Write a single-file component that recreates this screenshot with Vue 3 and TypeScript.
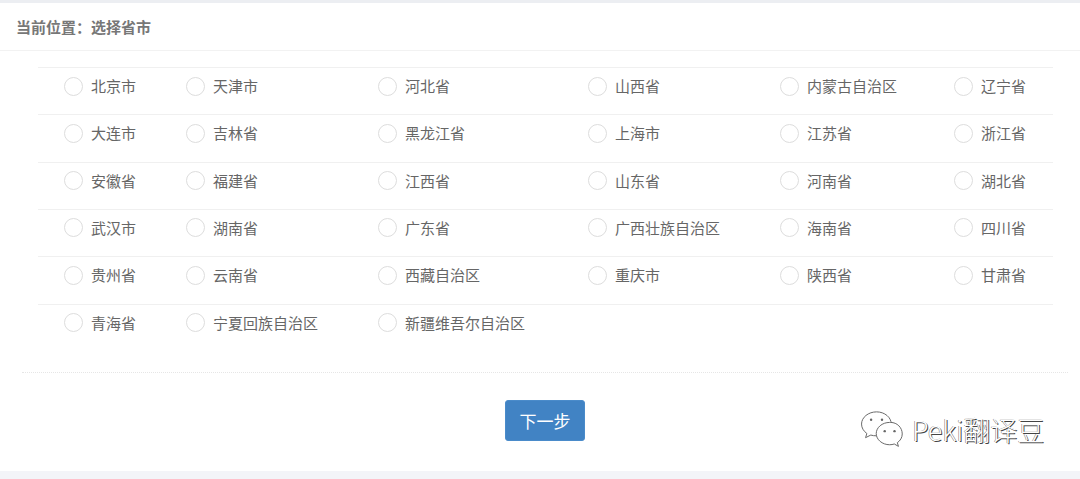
<script setup lang="ts">
const rows: string[][] = [
  ['北京市', '天津市', '河北省', '山西省', '内蒙古自治区', '辽宁省'],
  ['大连市', '吉林省', '黑龙江省', '上海市', '江苏省', '浙江省'],
  ['安徽省', '福建省', '江西省', '山东省', '河南省', '湖北省'],
  ['武汉市', '湖南省', '广东省', '广西壮族自治区', '海南省', '四川省'],
  ['贵州省', '云南省', '西藏自治区', '重庆市', '陕西省', '甘肃省'],
  ['青海省', '宁夏回族自治区', '新疆维吾尔自治区'],
]
</script>

<template>
  <div class="page">
    <header class="head">当前位置：选择省市</header>
    <main class="body">
      <div class="list">
        <div v-for="(row, i) in rows" :key="i" class="row">
          <label v-for="name in row" :key="name" class="opt">
            <span class="radio"></span>
            <span class="name">{{ name }}</span>
          </label>
        </div>
      </div>
    </main>
    <div class="actions">
      <button class="next" type="button">下一步</button>
    </div>
    <div class="mark">
      <svg class="wechat" width="44" height="37" viewBox="0 0 40 34" fill="#fff" stroke="#666" stroke-width="0.9">
        <path d="M15 .8C7.500.8 1.200 5.800 1.200 12c0 3.500 1.900 6.500 4.900 8.700l-1.200 3.800 4.800-2.400c1.600.5 3.200.7 5 .7 7.500 0 13.800-4.900 13.800-10.900S22.500.8 15 .8z" />
        <circle cx="10" cy="8" r="1.100" fill="#666" stroke="none" />
        <circle cx="20" cy="8" r="1.100" fill="#666" stroke="none" />
        <path d="M27 10.500c-6.800 0-12.300 4.600-12.300 10.200S20.200 31 27 31c1.500 0 3-.2 4.300-.7l3.800 2.200-1-3.400c2.800-1.900 4.500-4.800 4.500-8 0-5.900-4.800-10.600-10.600-10.600z" />
        <circle cx="22.500" cy="18.500" r="1.100" fill="#666" stroke="none" />
        <circle cx="31.500" cy="18.500" r="1.100" fill="#666" stroke="none" />
      </svg>
      <span class="mark-text">Peki翻译豆</span>
    </div>
  </div>
</template>

<style>
html, body { margin: 0; background: #fff; }
</style>

<style scoped>
.page {
  position: relative;
  width: 1080px;
  height: 479px;
  box-sizing: border-box;
  overflow: hidden;
  background: #fff;
  border-top: 3px solid #eceef2;
  border-bottom: 8px solid #f3f4f8;
  font-family: "Liberation Sans", "Noto Sans CJK SC", sans-serif;
}
.head {
  height: 48px;
  box-sizing: border-box;
  padding: 15px 16px 0;
  border-bottom: 1px solid #f2f2f2;
  font-size: 15px;
  line-height: 20px;
  font-weight: 700;
  color: #777;
}
.body {
  margin: 0 12px 0 22px;
  height: 322px;
  box-sizing: border-box;
  padding: 16px 15px 0 16px;
  border-bottom: 1px dotted #e6e6e6;
}
.row {
  display: grid;
  grid-template-columns: 122px 192px 210px 192px 174px 1fr;
  height: 47.340px;
  box-sizing: border-box;
  padding-left: 26px;
  border-top: 1px solid #f0f0f0;
}
.opt {
  display: flex;
  align-items: center;
  height: 37px;
}
.radio {
  width: 19px;
  height: 19px;
  box-sizing: border-box;
  border: 1px solid #ddd;
  border-radius: 50%;
  background: #fff;
  margin-right: 8px;
  margin-top: -1px;
}
.name {
  font-size: 15px;
  color: #666;
  white-space: nowrap;
  line-height: 37px;
}
.actions {
  display: flex;
  justify-content: center;
  padding: 27px 0 0 10px;
}
.next {
  width: 80px;
  height: 41px;
  padding: 0;
  border: 1px solid #4a8bca;
  border-radius: 3px;
  background: #4183c4;
  color: #fff;
  font-family: inherit;
  font-size: 17px;
}
.mark {
  position: absolute;
  left: 860px;
  top: 408px;
  display: flex;
  align-items: center;
}
.mark-text {
  margin-left: 8px;
  font-family: "Noto Sans CJK SC", sans-serif;
  font-weight: 300;
  font-size: 27px;
  line-height: 32px;
  color: #fff;
  text-shadow: 1px 1px 0 #444, -0.5px -0.5px 0 #777;
  white-space: nowrap;
}
</style>
